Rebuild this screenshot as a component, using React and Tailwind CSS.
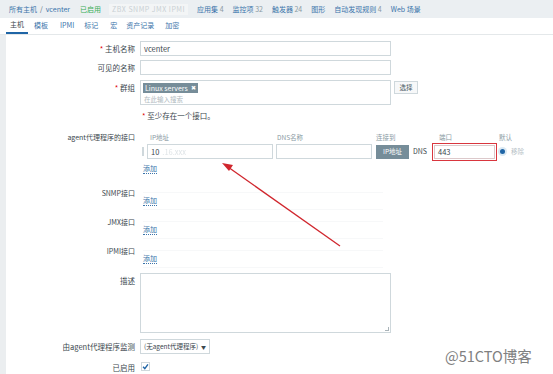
import React from "react";

const font = { fontFamily: '"Noto Sans CJK SC", "Noto Sans", Arial, sans-serif' };

function Row({ label, star, h, children, className = "" }) {
  return (
    <div className={`flex ${className}`} style={{ height: h }}>
      <div className="w-[134px] shrink-0 text-right pr-[5px] text-[7.5px] text-[#3b474e] leading-[15px]">
        {star && <span className="text-[#d00]">* </span>}
        {label}
      </div>
      <div className="flex-1 relative">{children}</div>
    </div>
  );
}

function Input({ w, h = 15, children, className = "" }) {
  return (
    <div
      className={`border border-[#cfd8dc] bg-white flex items-center px-[3px] text-[7.5px] text-[#3b474e] ${className}`}
      style={{ width: w, height: h }}
    >
      {children}
    </div>
  );
}

export default function App() {
  return (
    <div className="w-[553px] h-[374px] bg-white overflow-hidden relative" style={font}>
      {/* top nav */}
      <div className="h-[18px] bg-[#ebeff2] flex items-center text-[7px] text-[#3a74aa] pl-[9px] whitespace-nowrap">
        <span>所有主机</span>
        <span className="mx-[3px] text-[#5a6a73]">/</span>
        <span>vcenter</span>
        <span className="ml-[10px] text-[#3aae57]">已启用</span>
        <span className="ml-[8px] bg-[#f3f5f6] text-[#c9d0d4] px-[3px] h-[11px] flex items-center tracking-[0.5px]">
          ZBX SNMP JMX IPMI
        </span>
        <span className="ml-[9px]">应用集 <span className="text-[#8a9aa3]">4</span></span>
        <span className="ml-[9px]">监控项 <span className="text-[#8a9aa3]">32</span></span>
        <span className="ml-[9px]">触发器 <span className="text-[#8a9aa3]">24</span></span>
        <span className="ml-[9px]">图形</span>
        <span className="ml-[9px]">自动发现规则 <span className="text-[#8a9aa3]">4</span></span>
        <span className="ml-[9px]">Web 场景</span>
      </div>
      {/* tabs */}
      <div className="h-[17px] bg-white flex items-end text-[7px] text-[#3a74aa] pl-[6px] border-b border-[#e4e8ea]">
        <div className="px-[4px] pb-[3px] border-b-2 border-[#1f65a6] text-[#3b474e]">主机</div>
        <div className="ml-[6px] pb-[4px]">模板</div>
        <div className="ml-[12px] pb-[4px]">IPMI</div>
        <div className="ml-[10px] pb-[4px]">标记</div>
        <div className="ml-[12px] pb-[4px]">宏</div>
        <div className="ml-[9px] pb-[4px]">资产记录</div>
        <div className="ml-[11px] pb-[4px]">加密</div>
      </div>

      <div className="flex h-[339px]">
        <div className="w-[6px] bg-[#ebeef0] shrink-0" />
        <div className="flex-1 pt-[6px] pl-[0px]">
          <Row label="主机名称" star h={19}>
            <Input w={251}>vcenter</Input>
          </Row>
          <Row label="可见的名称" h={20}>
            <Input w={251} />
          </Row>
          <Row label="群组" star h={28} className="items-start">
            <div className="flex items-start gap-[3px]">
              <div className="border border-[#cfd8dc] bg-white w-[251px] h-[25px] px-[2px] pt-[2px] flex flex-col items-start">
                <div className="flex items-center bg-[#768d99] text-white text-[7px] h-[10px] px-[2px] leading-[10px]">
                  Linux servers <span className="ml-[3px] text-[6px] leading-[10px]">✖</span>
                </div>
                <div className="text-[6.5px] text-[#b0bac0] h-[10px] leading-[10px] pl-[1px] mt-[1px]">在此输入搜索</div>
              </div>
              <div className="border border-[#cfd8dc] bg-[#f7f8f9] text-[6.5px] text-[#4a5a63] h-[13px] w-[24px] flex items-center justify-center mt-[1px]">
                选择
              </div>
            </div>
          </Row>
          <Row label="" h={19}>
            <div className="pl-[2px] text-[7.5px] leading-[15px] text-[#3b474e]">
              <span className="text-[#d00]">* </span>至少存在一个接口。
            </div>
          </Row>
          {/* agent interface */}
          <div className="flex h-[58px]">
            <div className="w-[134px] shrink-0 text-right pr-[5px] text-[7px] text-[#3b474e] pt-[5px]">
              agent代理程序的接口
            </div>
            <div className="flex-1 pt-[5px]">
              <div className="flex text-[6.5px] text-[#8a9aa3] h-[10px] leading-[10px]">
                <div className="w-[137px] pl-[10px]">IP地址</div>
                <div className="w-[99px]">DNS名称</div>
                <div className="w-[63px]">连接到</div>
                <div className="w-[60px]">端口</div>
                <div>默认</div>
              </div>
              <div className="flex items-center h-[17px] mt-[1px]">
                <div className="w-[2px] h-[9px] border-x border-[#cfd8dc] ml-[2px] mr-[3px]" />
                <Input w={126} className="mr-[3px]">
                  <span>10</span>
                  <span className="ml-[3px] text-[#dfe4e7] blur-[0.6px]">.16.xxx</span>
                </Input>
                <Input w={96} className="mr-[4px]" />
                <div className="h-[14px] w-[33px] bg-[#768d99] text-white text-[6.5px] flex items-center justify-center">
                  IP地址
                </div>
                <div className="h-[14px] w-[22px] text-[7px] text-[#3b474e] flex items-center justify-center">
                  DNS
                </div>
                <div className="border-[1.5px] border-[#d9363e] ml-[1px] p-[1px]">
                  <Input w={61} h={14} className="border-[#dcc9cb]">443</Input>
                </div>
                <div className="w-[5px] h-[5px] rounded-full bg-[#1f65a6] ml-[3px] ring-2 ring-[#dbe9f3]" />
                <div className="ml-[6px] text-[6.5px] text-[#b8c2c7]">移除</div>
              </div>
              <div className="text-[7px] text-[#3a74aa] mt-[3px] pl-[3px] leading-[10px]">
                <span className="border-b border-dotted border-[#3a74aa]">添加</span>
              </div>
            </div>
          </div>
          {["SNMP接口", "JMX接口", "IPMI接口"].map((l) => (
            <div key={l} className="flex h-[29px]">
              <div className="w-[134px] shrink-0 text-right pr-[5px] text-[7px] text-[#3b474e] pt-[3px]">{l}</div>
              <div className="flex-1 pt-[7px] pl-[3px]">
                <div className="w-[240px] h-[18px] border-y border-[#f7f8f9] flex items-center">
                  <span className="text-[7px] text-[#3a74aa] border-b border-dotted border-[#3a74aa] leading-[9px]">添加</span>
                </div>
              </div>
            </div>
          ))}
          <Row label="描述" h={67} className="pt-[1px]">
            <div className="border border-[#cfd8dc] w-[251px] h-[60px] relative">
              <div className="absolute right-[1px] bottom-[1px] w-[4px] h-[4px] border-r border-b border-[#aab4b9]" />
            </div>
          </Row>
          <Row label="由agent代理程序监测" h={21}>
            <div className="border border-[#cfd8dc] w-[70px] h-[15px] flex items-center px-[3px] text-[6.5px] text-[#3b474e] justify-between whitespace-nowrap">
              <span>(无agent代理程序)</span>
              <span className="text-[5px]">▼</span>
            </div>
          </Row>
          <Row label="已启用" h={14}>
            <div className="w-[9px] h-[9px] border border-[#cfd8dc] flex items-center justify-center mt-[2px] ml-[1px]">
              <svg width="7" height="7" viewBox="0 0 10 10">
                <path d="M1.5 5.5 L4 8 L8.5 2" stroke="#1f65a6" strokeWidth="2" fill="none" />
              </svg>
            </div>
          </Row>
        </div>
      </div>

      {/* watermark */}
      <div className="absolute left-[445px] top-[345px] text-[14.5px] text-[#808080]">
        @51CTO博客
      </div>

      {/* red arrow annotation */}
      <svg className="absolute left-0 top-0 pointer-events-none" width="553" height="374">
        <line x1="340" y1="246" x2="228" y2="167" stroke="#d0262d" strokeWidth="1.3" />
        <path d="M222 163 L233 165 L229 171 Z" fill="#d0262d" />
      </svg>
    </div>
  );
}
